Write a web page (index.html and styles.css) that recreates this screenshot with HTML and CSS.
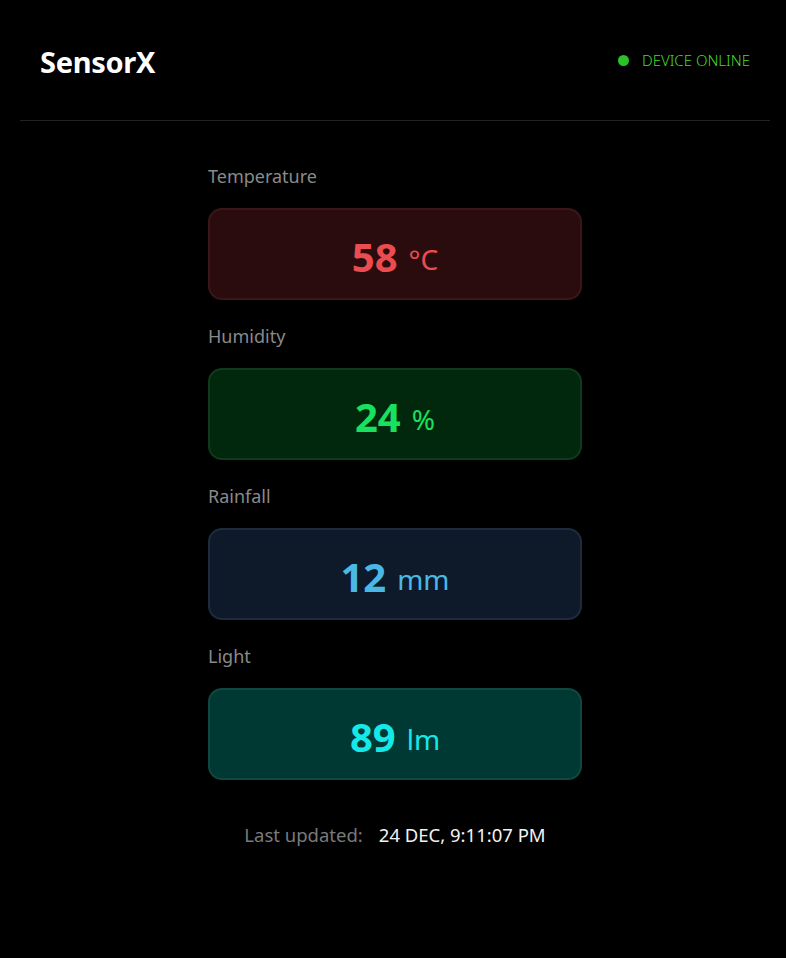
FILE: index.html
```html
<!DOCTYPE html>
<html lang="en">
<head>
<meta charset="utf-8">
<title>SensorX</title>
<link rel="stylesheet" href="styles.css">
</head>
<body>
<header class="topbar">
  <div class="brand">SensorX</div>
  <div class="status"><span class="dot"></span><span class="status-text">DEVICE ONLINE</span></div>
</header>
<main class="readings">
  <section class="reading">
    <div class="label">Temperature</div>
    <div class="card card-temp"><span class="value">58</span><span class="unit">°C</span></div>
  </section>
  <section class="reading">
    <div class="label">Humidity</div>
    <div class="card card-hum"><span class="value">24</span><span class="unit">%</span></div>
  </section>
  <section class="reading">
    <div class="label">Rainfall</div>
    <div class="card card-rain"><span class="value">12</span><span class="unit">mm</span></div>
  </section>
  <section class="reading">
    <div class="label">Light</div>
    <div class="card card-light"><span class="value">89</span><span class="unit">lm</span></div>
  </section>
  <div class="updated"><span class="updated-label">Last updated:</span><span class="updated-time">24 DEC, 9:11:07 PM</span></div>
</main>
</body>
</html>
```

FILE: styles.css
```css
* { box-sizing: border-box; }
html, body { margin: 0; padding: 0; background: #000; }
body {
  font-family: "Noto Sans", "Open Sans", sans-serif;
  color: #fff;
  padding: 0 16px 0 20px;
}
.topbar {
  display: flex;
  align-items: center;
  justify-content: space-between;
  height: 121px;
  padding: 0 20px 0 20px;
  border-bottom: 1px solid #222;
}
.brand {
  font-size: 29px;
  font-weight: 700;
  letter-spacing: -0.3px;
  padding-top: 2px;
}
.status {
  display: flex;
  align-items: center;
  gap: 13px;
}
.dot {
  width: 11px;
  height: 11px;
  border-radius: 50%;
  background: #2ac12a;
}
.status-text {
  color: #44d92a;
  font-size: 15px;
  font-weight: 300;
}
.readings {
  width: 374px;
  margin: 0 auto;
  padding-top: 44px;
  display: flex;
  flex-direction: column;
  gap: 25px;
}
.reading { display: flex; flex-direction: column; gap: 21px; }
.label {
  color: #8a8a8a;
  font-size: 18px;
  line-height: 22px;
}
.card {
  height: 92px;
  border-radius: 14px;
  border: 2px solid;
  display: flex;
  align-items: center;
  justify-content: center;
  gap: 11px;
  padding-top: 4px;
}
.value { font-size: 40px; font-weight: 700; }
.unit { font-size: 28px; font-weight: 400; padding-top: 6px; }
.card-temp { background: #2b0c0e; border-color: #3a1619; color: #ea4c4f; }
.card-hum { background: #01280c; border-color: #0f3a1c; color: #17e15e; }
.card-rain { background: #0e1a29; border-color: #1d2b3c; color: #4ab8e4; }
.card-light { background: #003833; border-color: #104840; color: #16e8e8; }
.updated {
  display: flex;
  justify-content: center;
  gap: 16px;
  font-size: 18.5px;
  margin-top: 17px;
}
.updated-label { color: #7a7a7a; }
.updated-time { color: #f2f2f2; }
```
